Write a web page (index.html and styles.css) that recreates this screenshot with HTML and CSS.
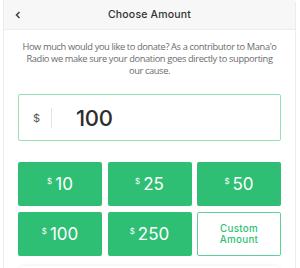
FILE: index.html
```html
<!DOCTYPE html>
<html>
<head>
<meta charset="utf-8">
<link rel="stylesheet" href="styles.css">
</head>
<body>
<div class="card">
  <div class="header">
    <svg class="back" width="6" height="8" viewBox="0 0 6 8"><polyline points="4.5,1 1.5,4 4.5,7" fill="none" stroke="#444" stroke-width="1.6"/></svg>
    <span class="title">Choose Amount</span>
  </div>
  <div class="content">
    <p class="intro">How much would you like to donate? As a contributor to Mana'o<br>Radio we make sure your donation goes directly to supporting<br>our cause.</p>
    <div class="amount-input">
      <span class="cur">$</span>
      <span class="sep"></span>
      <span class="val">100</span>
    </div>
    <div class="grid">
      <div class="btn"><sup>$</sup>10</div>
      <div class="btn"><sup>$</sup>25</div>
      <div class="btn"><sup>$</sup>50</div>
      <div class="btn"><sup>$</sup>100</div>
      <div class="btn"><sup>$</sup>250</div>
      <div class="btn custom">Custom<br>Amount</div>
    </div>
    <div class="next"></div>
  </div>
</div>
</body>
</html>
```

FILE: styles.css
```css
html, body { margin: 0; padding: 0; background: #fff; }
body { font-family: "Inter", "Open Sans", sans-serif; width: 300px; height: 268px; overflow: hidden; }
.card {
  margin-left: 3px;
  width: 293px;
  border: 1px solid #ececec;
  border-top: none;
  border-bottom: none;
  border-radius: 0 4px 0 0;
  box-sizing: border-box;
  height: 268px;
  overflow: hidden;
}
.header {
  height: 29px;
  background: #f7f7f7;
  border-bottom: 1px solid #ececec;
  border-radius: 0 4px 0 0;
  display: flex;
  align-items: center;
  justify-content: center;
  position: relative;
}
.back { position: absolute; left: 11px; top: 11px; }
.title { font-size: 10.5px; color: #333; font-weight: 500; letter-spacing: 0.2px; }
.content { padding: 0 14px; }
.intro {
  margin: 11px -6px 0;
  text-align: center;
  font-family: "Open Sans", sans-serif;
  font-size: 9.3px;
  letter-spacing: -0.38px;
  line-height: 12px;
  white-space: nowrap;
  color: #6b6b6b;
}
.amount-input {
  margin-top: 17px;
  height: 47px;
  box-sizing: border-box;
  border: 1.5px solid #93e0b6;
  border-radius: 2px;
  display: flex;
  align-items: center;
  padding-left: 14px;
}
.cur { font-size: 11px; color: #555; width: 18px; }
.sep { width: 1px; height: 20px; background: #e4e4e4; }
.val { font-size: 22px; color: #2d2d2d; margin-left: 24px; font-weight: 500; letter-spacing: -0.3px; }
.grid {
  margin-top: 21px;
  display: grid;
  grid-template-columns: repeat(3, 1fr);
  grid-auto-rows: 44px;
  gap: 6px 5.5px;
}
.btn {
  background: #2ebf74;
  border-radius: 2px;
  color: #fff;
  font-size: 17px;
  display: flex;
  align-items: center;
  justify-content: center;
}
.btn sup { font-size: 8px; margin-right: 3px; position: relative; top: -3px; vertical-align: baseline; }
.btn.custom {
  background: #fff;
  border: 1.5px solid #5fd196;
  box-sizing: border-box;
  color: #2ebf74;
  font-size: 9.8px;
  font-weight: 500;
  letter-spacing: 0.3px;
  line-height: 11.5px;
  text-align: center;
}
.next {
  margin-top: 10px;
  margin-left: 2px;
  margin-right: 2px;
  height: 20px;
  border-radius: 4px;
  box-shadow: 0 0 4px rgba(0,0,0,0.08);
}
```
